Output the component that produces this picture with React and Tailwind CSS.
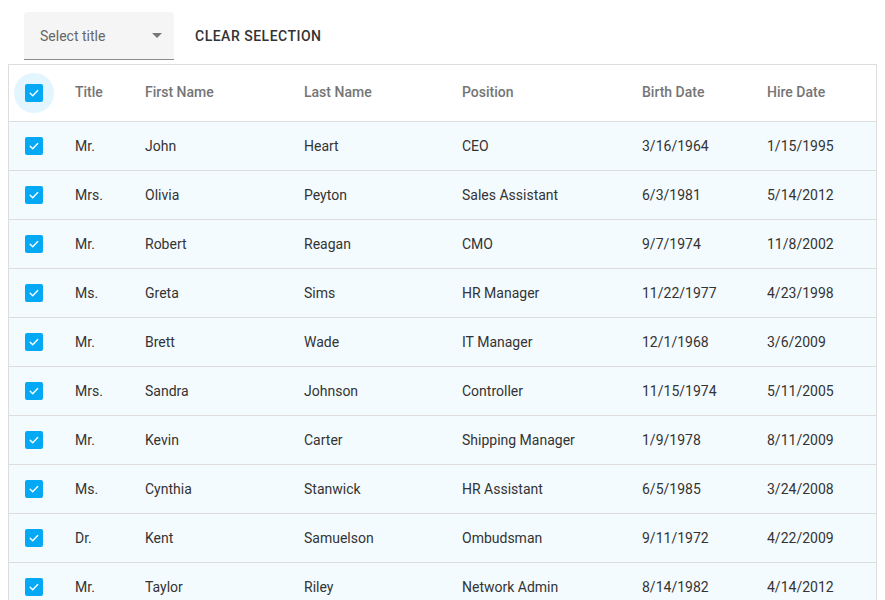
import React from "react";

const rows = [
  ["Mr.", "John", "Heart", "CEO", "3/16/1964", "1/15/1995"],
  ["Mrs.", "Olivia", "Peyton", "Sales Assistant", "6/3/1981", "5/14/2012"],
  ["Mr.", "Robert", "Reagan", "CMO", "9/7/1974", "11/8/2002"],
  ["Ms.", "Greta", "Sims", "HR Manager", "11/22/1977", "4/23/1998"],
  ["Mr.", "Brett", "Wade", "IT Manager", "12/1/1968", "3/6/2009"],
  ["Mrs.", "Sandra", "Johnson", "Controller", "11/15/1974", "5/11/2005"],
  ["Mr.", "Kevin", "Carter", "Shipping Manager", "1/9/1978", "8/11/2009"],
  ["Ms.", "Cynthia", "Stanwick", "HR Assistant", "6/5/1985", "3/24/2008"],
  ["Dr.", "Kent", "Samuelson", "Ombudsman", "9/11/1972", "4/22/2009"],
  ["Mr.", "Taylor", "Riley", "Network Admin", "8/14/1982", "4/14/2012"],
];

function Check() {
  return (
    <span className="flex h-[18px] w-[18px] items-center justify-center rounded-[2px] bg-[#03a9f4]">
      <svg width="12" height="12" viewBox="0 0 12 12" fill="none">
        <path d="M2.2 6.3l2.5 2.4 5-5.2" stroke="#fff" strokeWidth="1.4" strokeLinecap="round" strokeLinejoin="round" />
      </svg>
    </span>
  );
}

export default function App() {
  return (
    <div className="h-[600px] overflow-hidden bg-white font-['Roboto',sans-serif] text-[14px]">
      <div className="flex items-center pt-3 pl-6">
        <div className="flex h-12 w-[150px] items-center justify-between rounded-t bg-[#f5f5f5] border-b border-[#8c8c8c] pl-4 pr-3">
          <span className="pt-px text-[#666]">Select title</span>
          <svg width="10" height="5" viewBox="0 0 10 5">
            <path d="M0 0h10L5 5z" fill="#777" />
          </svg>
        </div>
        <button className="ml-[21px] font-medium uppercase tracking-[0.5px] text-[#333]">Clear selection</button>
      </div>

      <div className="mt-1 ml-2 w-[869px] border border-[#ddd]">
        <table className="w-full table-fixed border-collapse">
          <colgroup>
            <col className="w-[50px]" />
            <col className="w-[70px]" />
            <col className="w-[159px]" />
            <col className="w-[158px]" />
            <col className="w-[180px]" />
            <col className="w-[125px]" />
            <col />
          </colgroup>
          <thead>
            <tr className="h-[56px] border-b border-[#ddd] text-left font-medium text-[#757575]">
              <th className="pl-4">
                <span className="relative flex h-[18px] w-[18px] items-center justify-center">
                  <span className="absolute -left-[11px] -top-[11px] h-10 w-10 rounded-full bg-[#e3f5fe]" />
                  <span className="relative"><Check /></span>
                </span>
              </th>
              <th className="px-4 font-medium">Title</th>
              <th className="px-4 font-medium">First Name</th>
              <th className="px-4 font-medium">Last Name</th>
              <th className="px-4 font-medium">Position</th>
              <th className="px-4 font-medium">Birth Date</th>
              <th className="px-4 font-medium">Hire Date</th>
            </tr>
          </thead>
          <tbody>
            {rows.map((r, i) => (
              <tr key={i} className="h-[49px] border-b border-[#ddd] bg-[#f4fbff] text-[#333]">
                <td className="pl-4"><Check /></td>
                {r.map((c, j) => (
                  <td key={j} className="px-4 pt-px">{c}</td>
                ))}
              </tr>
            ))}
          </tbody>
        </table>
      </div>
    </div>
  );
}
